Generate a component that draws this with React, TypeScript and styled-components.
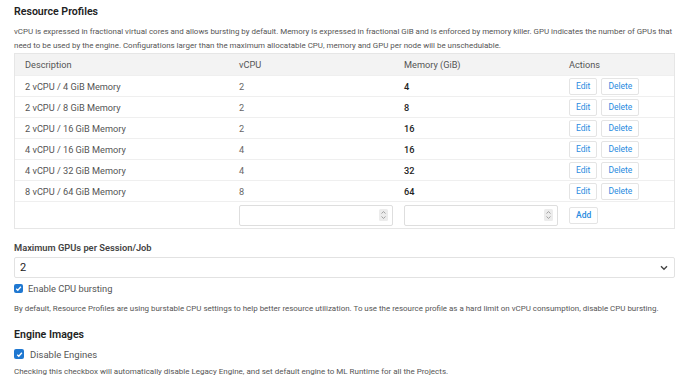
import React from "react";
import styled, { createGlobalStyle } from "styled-components";

const GlobalStyle = createGlobalStyle`
  html, body {
    margin: 0;
    padding: 0;
    background: #ffffff;
  }
  body {
    font-family: Roboto, "Liberation Sans", Arial, sans-serif;
    color: #333;
  }
`;

type Profile = { desc: string; cpu: number; mem: number };

const profiles: Profile[] = [
  { desc: "2 vCPU / 4 GiB Memory", cpu: 2, mem: 4 },
  { desc: "2 vCPU / 8 GiB Memory", cpu: 2, mem: 8 },
  { desc: "2 vCPU / 16 GiB Memory", cpu: 2, mem: 16 },
  { desc: "4 vCPU / 16 GiB Memory", cpu: 4, mem: 16 },
  { desc: "4 vCPU / 32 GiB Memory", cpu: 4, mem: 32 },
  { desc: "8 vCPU / 64 GiB Memory", cpu: 8, mem: 64 },
];

const SpinIcon = () => (
  <svg width="9" height="12" viewBox="0 0 9 12">
    <rect x="0" y="0" width="9" height="12" rx="1.5" fill="#ececec" />
    <path d="M2.5 4.5 L4.5 2.6 L6.5 4.5" fill="none" stroke="#999" strokeWidth="0.9" />
    <path d="M2.5 7.5 L4.5 9.4 L6.5 7.5" fill="none" stroke="#999" strokeWidth="0.9" />
  </svg>
);

const ChevronDown = () => (
  <svg width="8" height="6" viewBox="0 0 8 6">
    <path d="M1 1.3 L4 4.3 L7 1.3" fill="none" stroke="#444" strokeWidth="1.4" />
  </svg>
);

const CheckMark = () => (
  <svg width="7" height="7" viewBox="0 0 8 8">
    <path d="M1.4 4.2 L3.2 6 L6.7 2" fill="none" stroke="#fff" strokeWidth="1.5" />
  </svg>
);

export default function App() {
  return (
    <>
      <GlobalStyle />
      <Page>
        <Heading>Resource Profiles</Heading>
        <Help $top={6} $size={7.95} $wide>
          vCPU is expressed in fractional virtual cores and allows bursting by default. Memory is
          expressed in fractional GiB and is enforced by memory killer. GPU indicates the number of
          GPUs that need to be used by the engine. Configurations larger than the maximum
          allocatable CPU, memory and GPU per node will be unschedulable.
        </Help>

        <Table>
          <HeaderRow>
            <HeadCell>Description</HeadCell>
            <HeadCell>vCPU</HeadCell>
            <HeadCell>Memory (GiB)</HeadCell>
            <HeadCell>Actions</HeadCell>
          </HeaderRow>
          {profiles.map((p) => (
            <Row key={p.desc}>
              <Cell>{p.desc}</Cell>
              <Cell $muted>{p.cpu}</Cell>
              <Cell $strong>{p.mem}</Cell>
              <ActionCell>
                <SmallButton>Edit</SmallButton>
                <SmallButton>Delete</SmallButton>
              </ActionCell>
            </Row>
          ))}
          <InputRow>
            <Cell />
            <InputCell>
              <NumberBox>
                <NumberInput />
                <Spin>
                  <SpinIcon />
                </Spin>
              </NumberBox>
            </InputCell>
            <InputCell>
              <NumberBox>
                <NumberInput />
                <Spin>
                  <SpinIcon />
                </Spin>
              </NumberBox>
            </InputCell>
            <ActionCell>
              <SmallButton $bold>Add</SmallButton>
            </ActionCell>
          </InputRow>
        </Table>

        <FieldLabel>Maximum GPUs per Session/Job</FieldLabel>
        <SelectBox>
          <SelectValue>2</SelectValue>
          <ChevronDown />
        </SelectBox>

        <CheckRow $top={4}>
          <CheckBox $size={9}>
            <CheckMark />
          </CheckBox>
          <CheckLabel $size={9.3}>Enable CPU bursting</CheckLabel>
        </CheckRow>
        <Help $top={8} $size={7.95}>
          By default, Resource Profiles are using burstable CPU settings to help better resource
          utilization. To use the resource profile as a hard limit on vCPU consumption, disable CPU
          bursting.
        </Help>

        <Heading $top={12}>Engine Images</Heading>
        <CheckRow $top={6} $gap={6}>
          <CheckBox $size={10}>
            <CheckMark />
          </CheckBox>
          <CheckLabel $size={9.5}>Disable Engines</CheckLabel>
        </CheckRow>
        <Help $top={5} $size={8}>
          Checking this checkbox will automatically disable Legacy Engine, and set default engine to
          ML Runtime for all the Projects.
        </Help>
      </Page>
    </>
  );
}

const Page = styled.div`
  width: 661px;
  padding: 5px 0 0 14px;
`;

const Heading = styled.h2<{ $top?: number }>`
  margin: ${(p) => p.$top ?? 0}px 0 0;
  font-size: 10.6px;
  line-height: 14px;
  font-weight: 600;
  color: #222;
`;

const Help = styled.p<{ $top: number; $size: number; $wide?: boolean }>`
  margin: ${(p) => p.$top}px 0 0;
  width: ${(p) => (p.$wide ? "calc(100% + 6px)" : "auto")};
  font-size: ${(p) => p.$size}px;
  line-height: 14px;
  color: #555;
`;

const Table = styled.div`
  border: 1px solid #e6e6e6;
  font-size: 9.2px;
  color: #555;
`;

const grid = `
  display: grid;
  grid-template-columns: 214px 165px 165px 1fr;
  align-items: center;
`;

const HeaderRow = styled.div`
  ${grid};
  height: 21px;
  background: #f3f3f3;
`;

const Row = styled.div`
  ${grid};
  height: 21px;
  border-top: 1px solid #efefef;
  box-sizing: border-box;
`;

const InputRow = styled.div`
  ${grid};
  height: 27px;
  border-top: 1px solid #efefef;
  box-sizing: border-box;
`;

const HeadCell = styled.div`
  padding-left: 10px;
  color: #555;
`;

const Cell = styled.div<{ $muted?: boolean; $strong?: boolean }>`
  padding-left: 10px;
  color: ${(p) => (p.$strong ? "#222" : p.$muted ? "#666" : "#555")};
  font-weight: ${(p) => (p.$strong ? 500 : 400)};
`;

const InputCell = styled.div`
  padding-left: 10px;
`;

const ActionCell = styled.div`
  padding-left: 10px;
  display: flex;
  gap: 4px;
`;

const SmallButton = styled.button<{ $bold?: boolean }>`
  height: 17px;
  padding: 0 6px;
  border: 1px solid #e4e4e4;
  border-radius: 2px;
  background: #fff;
  color: #2a8be0;
  font-family: inherit;
  font-size: 8.5px;
  font-weight: ${(p) => (p.$bold ? 500 : 400)};
  line-height: 15px;
`;

const NumberBox = styled.div`
  position: relative;
  width: 154px;
  height: 21px;
`;

const NumberInput = styled.input`
  box-sizing: border-box;
  width: 100%;
  height: 100%;
  border: 1px solid #dedede;
  border-radius: 2px;
  background: #fff;
  outline: none;
`;

const Spin = styled.span`
  position: absolute;
  right: 5px;
  top: 4px;
  display: flex;
`;

const FieldLabel = styled.div`
  margin-top: 12px;
  font-size: 9.3px;
  line-height: 14px;
  font-weight: 600;
  color: #444;
`;

const SelectBox = styled.div`
  margin-top: 2px;
  box-sizing: border-box;
  height: 21px;
  padding: 0 6px 0 5px;
  border: 1px solid #e2e2e2;
  border-radius: 2px;
  display: flex;
  align-items: center;
  justify-content: space-between;
`;

const SelectValue = styled.span`
  font-size: 11px;
  color: #222;
`;

const CheckRow = styled.label<{ $top: number; $gap?: number }>`
  margin-top: ${(p) => p.$top}px;
  display: flex;
  align-items: center;
  gap: ${(p) => p.$gap ?? 5}px;
  height: 12px;
`;

const CheckBox = styled.span<{ $size: number }>`
  width: ${(p) => p.$size}px;
  height: ${(p) => p.$size}px;
  border-radius: 2px;
  background: #1f78d1;
  display: flex;
  align-items: center;
  justify-content: center;
`;

const CheckLabel = styled.span<{ $size: number }>`
  font-size: ${(p) => p.$size}px;
  color: #555;
`;
